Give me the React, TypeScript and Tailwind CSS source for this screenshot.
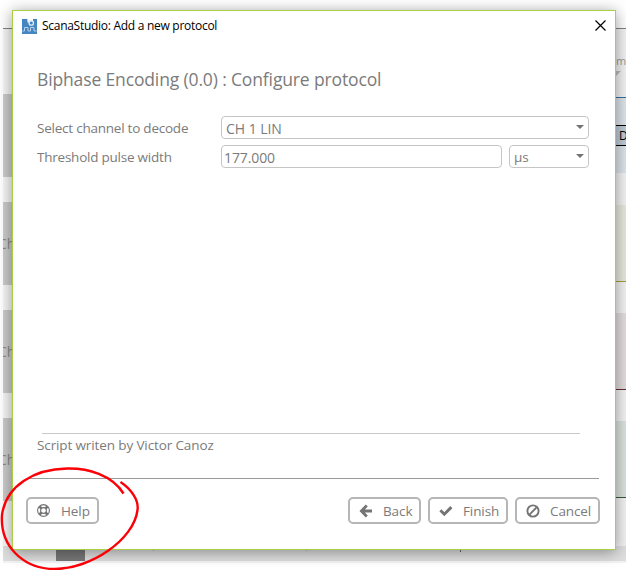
import type { ReactNode } from "react";

function AppIcon() {
  return (
    <svg width="15" height="15" viewBox="0 0 15 15" className="shrink-0">
      <path d="M0 0h5.5v3.5H15V15H0z" fill="#4585c0" />
      <path d="M11 0h4v5h-4z" fill="#4585c0" />
      <circle cx="9.3" cy="4" r="2.2" fill="#4585c0" stroke="#e3eef7" strokeWidth="1.3" />
      <path d="M5.5 1l2 1.2" stroke="#e3eef7" strokeWidth="1.2" />
      <path d="M0.5 12H2.5V8.5H6V12H8.5V8.5H12V12H14.5" fill="none" stroke="#b5d0e8" strokeWidth="1" />
    </svg>
  );
}

function LifeRing() {
  return (
    <svg width="13" height="13" viewBox="0 0 13 13" fill="none" stroke="#747474">
      <circle cx="6.5" cy="6.5" r="5.9" strokeWidth="1.1" />
      <circle cx="6.5" cy="6.5" r="2.9" strokeWidth="1.1" />
      <path d="M2.5 2.5l2.1 2.1M10.5 2.5L8.4 4.6M2.5 10.5l2.1-2.1M10.5 10.5L8.4 8.4" strokeWidth="2.7" />
    </svg>
  );
}

function BackArrow() {
  return (
    <svg width="14" height="14" viewBox="0 0 14 14" fill="none" stroke="#747474" strokeWidth="2.8">
      <path d="M7.8 1.5L2.4 7l5.4 5.5M2.6 7H13" />
    </svg>
  );
}

function Tick() {
  return (
    <svg width="14" height="14" viewBox="0 0 14 14" fill="none" stroke="#747474" strokeWidth="3">
      <path d="M1.4 6.3l3.9 3.9L12.4 3.1" />
    </svg>
  );
}

function Ban() {
  return (
    <svg width="14" height="14" viewBox="0 0 14 14" fill="none" stroke="#747474" strokeWidth="1.9">
      <circle cx="7" cy="7" r="5.6" />
      <path d="M3.2 10.8l7.6-7.6" />
    </svg>
  );
}

function Caret() {
  return (
    <svg width="8" height="4" viewBox="0 0 8 4" className="mb-px shrink-0">
      <path d="M0 0h8L4 4z" fill="#747474" />
    </svg>
  );
}

function Button({ className, icon, children }: { className: string; icon: ReactNode; children: ReactNode }) {
  return (
    <button className={`flex h-[27px] items-center rounded-[5px] border-2 border-[#b6b6b6] pl-[9px] text-[13.5px] text-[#7b7b7b] ${className}`}>
      <span className="flex w-6 shrink-0 items-center">{icon}</span>
      <span className="mt-px tracking-[-0.1px]">{children}</span>
    </button>
  );
}

function ChannelHeader() {
  return (
    <div className="flex h-[83px] items-center overflow-hidden bg-[#cbcbcb]">
      <span className="-ml-[5px]">Ch</span>
    </div>
  );
}

function Background() {
  return (
    <div className="flex h-[570px] flex-col overflow-hidden pl-[3px]">
      <div className="h-[29px] shrink-0 border-b border-[#808080] bg-white" />
      <div className="flex h-[517px] shrink-0 justify-between bg-[#f6f6f6]">
        <div className="flex w-5 flex-col gap-[25px] pt-[65px] text-[14px] text-[#888]">
          <div className="h-[83px] bg-[#cbcbcb]" />
          <ChannelHeader />
          <ChannelHeader />
          <ChannelHeader />
        </div>
        <div className="w-[10px] overflow-hidden bg-[#f2f2f2]">
          <div className="h-[68px] pt-[25px] text-[11px] leading-[14px] text-[#999]">
            ms
            <svg width="5" height="5" viewBox="0 0 5 5" className="mt-[3px]"><path d="M0 0h5L0 5z" fill="#bdbdbd" /></svg>
          </div>
          <div className="mb-8 h-[76px] border-t border-[#326f9f] bg-[#dce3e9] pt-[27px]">
            <div className="h-[21px] border-y border-black bg-[#bccbd7] pl-[3px] text-[12px] leading-[19px] text-black">D</div>
          </div>
          <div className="mb-[31px] h-[77px] border-b border-[#a99b32] bg-[#e7e8dc]" />
          <div className="mb-[31px] h-[77px] border-b border-[#6c2b30] bg-[#e2dcdd]" />
          <div className="h-[77px] border-b border-[#355b34] bg-[#dbe2dc]" />
        </div>
      </div>
      <div className="flex h-[15px] shrink-0 bg-[#dedede] pl-[53px]">
        <div className="h-full w-[29px] bg-[#777]" />
        <div className="ml-[68px] h-[5px] w-px bg-[#b5b5b5]" />
        <div className="ml-[152px] h-[5px] w-px bg-[#b5b5b5]" />
        <div className="ml-[153px] h-[6px] w-px bg-[#666]" />
      </div>
      <div className="h-[2px] shrink-0 bg-[#f3f3f3]" />
    </div>
  );
}

export default function App() {
  return (
    <div className="relative h-[570px] w-[626px] overflow-hidden bg-white font-['Open_Sans','Noto_Sans',sans-serif]">
      <Background />

      <div className="absolute top-[10px] left-[12px] flex h-[540px] w-[604px] flex-col border border-[#a9cf46] bg-white text-[13.5px] text-[#7b7b7b] shadow-[0_2px_14px_rgba(0,0,0,0.4)]">
        <div className="flex h-[30px] shrink-0 items-center pr-[9px] pl-[9px]">
          <AppIcon />
          <span className="ml-[5px] text-[12px] tracking-[-0.28px] text-black">ScanaStudio: Add a new protocol</span>
          <svg width="11" height="11" viewBox="0 0 11 11" className="mb-[2px] ml-auto"><path d="M.5 .5l10 10M10.5 .5l-10 10" stroke="#000" strokeWidth="1.2" /></svg>
        </div>

        <h1 className="mt-[25px] ml-6 h-[26px] text-[17.5px] leading-[26px] tracking-[-0.14px] whitespace-nowrap">Biphase Encoding (0.0) : Configure protocol</h1>

        <div className="mt-6 ml-6 flex h-[23px] items-center">
          <span className="w-[184px] pt-px tracking-[-0.23px]">Select channel to decode</span>
          <div className="flex h-[23px] w-[368px] items-center justify-between rounded-[4px] border border-[#c5c5c5] pr-1 pl-1"><span className="pt-[2px] text-[14px] tracking-[-0.05px]">CH 1 LIN</span><Caret /></div>
        </div>
        <div className="mt-[6px] ml-6 flex h-[23px] items-center">
          <span className="w-[184px] pt-px tracking-[-0.23px]">Threshold pulse width</span>
          <div className="flex h-[23px] w-[281px] items-center rounded-[4px] border border-[#c5c5c5] pl-[2px]"><span className="pt-px text-[14px] tracking-[-0.1px]">177.000</span></div>
          <div className="ml-[7px] flex h-[23px] w-[80px] items-center justify-between rounded-[4px] border border-[#c5c5c5] pr-1 pl-1"><span className="pt-[2px]">µs</span><Caret /></div>
        </div>

        <div className="mt-[265px] ml-[29px] h-px w-[538px] shrink-0 bg-[#c8c8c8]" />
        <p className="mt-[1px] ml-6 h-[21px] leading-[21px] tracking-[-0.12px]">Script writen by Victor Canoz</p>

        <div className="mt-[22px] ml-[14px] h-px w-[572px] shrink-0 bg-[#999]" />
        <div className="mt-[18px] ml-[13px] flex w-[574px] items-center">
          <Button className="w-[73px]" icon={<LifeRing />}>Help</Button>
          <Button className="ml-auto w-[73px]" icon={<BackArrow />}>Back</Button>
          <Button className="ml-[7px] w-[80px]" icon={<Tick />}>Finish</Button>
          <Button className="ml-[7px] w-[85px]" icon={<Ban />}>Cancel</Button>
        </div>
      </div>

      <svg width="626" height="570" viewBox="0 0 626 570" className="pointer-events-none absolute inset-0">
        <path d="M123.5 493.5C112 475 88 468 67 468.5C35 469 6 485 2 515C0 545 22 569 55 569C90 569 134 540 137.5 510C139 500 131 489 120.5 482" fill="none" stroke="#fb0007" strokeWidth="2.4" />
      </svg>
    </div>
  );
}
